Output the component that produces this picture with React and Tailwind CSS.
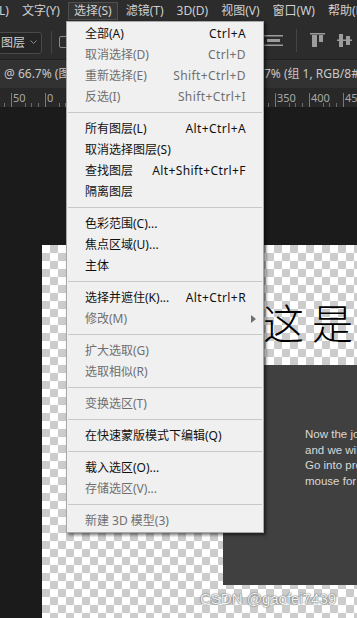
import React from 'react';

const menuBar = ['L)', '文字(Y)', '选择(S)', '滤镜(T)', '3D(D)', '视图(V)', '窗口(W)', '帮助(H)'];

const menu = [
  { label: '全部(A)', keys: 'Ctrl+A' },
  { label: '取消选择(D)', keys: 'Ctrl+D', off: true },
  { label: '重新选择(E)', keys: 'Shift+Ctrl+D', off: true },
  { label: '反选(I)', keys: 'Shift+Ctrl+I', off: true },
  'sep',
  { label: '所有图层(L)', keys: 'Alt+Ctrl+A' },
  { label: '取消选择图层(S)' },
  { label: '查找图层', keys: 'Alt+Shift+Ctrl+F' },
  { label: '隔离图层' },
  'sep',
  { label: '色彩范围(C)...' },
  { label: '焦点区域(U)...' },
  { label: '主体' },
  'sep',
  { label: '选择并遮住(K)...', keys: 'Alt+Ctrl+R' },
  { label: '修改(M)', off: true, sub: true },
  'sep',
  { label: '扩大选取(G)', off: true },
  { label: '选取相似(R)', off: true },
  'sep',
  { label: '变换选区(T)', off: true },
  'sep',
  { label: '在快速蒙版模式下编辑(Q)' },
  'sep',
  { label: '载入选区(O)...' },
  { label: '存储选区(V)...', off: true },
  'sep',
  { label: '新建 3D 模型(3)', off: true },
];

const Ruler = () => {
  const groups = [11, 275];
  const ticks = [];
  groups.forEach((start, g) => {
    const count = g === 0 ? 2 : 3;
    for (let m = 0; m < count; m++) {
      const x = start + m * 34;
      ticks.push(<line key={`M${g}${m}`} x1={x + 0.5} x2={x + 0.5} y1={5} y2={19} stroke="#7a7a7a" />);
      for (let k = 2; k < 5; k++) {
        const mx = Math.round(x + k * 6.8) + 0.5;
        ticks.push(<line key={`m${g}${m}${k}`} x1={mx} x2={mx} y1={15} y2={19} stroke="#6a6a6a" />);
      }
    }
  });
  ticks.push(<line key="pre" x1={4.5} x2={4.5} y1={15} y2={19} stroke="#6a6a6a" />);
  ticks.push(<line key="pre2" x1={268.5} x2={268.5} y1={15} y2={19} stroke="#6a6a6a" />);
  return (
    <svg width="357" height="19" className="block">
      {ticks}
      <text x="13" y="14" fontSize="11" fill="#a9a9a9" fontFamily="Noto Sans">50</text>
      <text x="47" y="14" fontSize="11" fill="#a9a9a9" fontFamily="Noto Sans">0</text>
      <text x="277" y="14" fontSize="11" fill="#a9a9a9" fontFamily="Noto Sans">350</text>
      <text x="311" y="14" fontSize="11" fill="#a9a9a9" fontFamily="Noto Sans">400</text>
      <text x="345" y="14" fontSize="11" fill="#a9a9a9" fontFamily="Noto Sans">450</text>
    </svg>
  );
};

const AlignIcons = () => (
  <div className="flex items-center ml-auto">
    <svg width="19" height="11" className="mr-[13px]">
      <rect x="0" y="0" width="19" height="1.5" fill="#9c9c9c" />
      <rect x="3" y="4" width="13" height="3" fill="#9c9c9c" />
      <rect x="0" y="9.5" width="19" height="1.5" fill="#9c9c9c" />
    </svg>
    <div className="w-px h-[23px] bg-[#454545] mr-[13px]" />
    <svg width="15" height="15" className="mr-[12px]">
      <rect x="0" y="0" width="15" height="1.5" fill="#9c9c9c" />
      <rect x="2" y="2" width="5" height="12" fill="#9c9c9c" />
      <rect x="9" y="2" width="4" height="7" fill="#9c9c9c" />
    </svg>
    <svg width="15" height="13" className="mr-[5px]">
      <rect x="0" y="5.5" width="15" height="1.5" fill="#9c9c9c" />
      <rect x="2" y="0" width="4" height="13" fill="#9c9c9c" />
      <rect x="9" y="2" width="4" height="9" fill="#9c9c9c" />
    </svg>
  </div>
);

export default function App() {
  return (
    <div className="relative w-[357px] h-[618px] overflow-hidden bg-[#1b1b1b] font-['Noto_Sans','Noto_Sans_CJK_SC',sans-serif] flex flex-col">
      {/* menu bar */}
      <div className="h-[22px] shrink-0 bg-[#2c2c2c] flex items-center gap-[3px] ml-[-6px]">
        {menuBar.map((m) => (
          <div
            key={m}
            className={`h-[18px] px-[5px] flex items-center text-[12px] text-[#d0d0d0] whitespace-nowrap ${
              m === '选择(S)' ? 'bg-[#353535] border border-[#4f4f4f] px-[4px]' : ''
            }`}
          >
            {m}
          </div>
        ))}
      </div>

      {/* options bar */}
      <div className="h-[38px] shrink-0 bg-[#2c2c2c] border-b border-[#212121] flex items-center">
        <div className="h-[22px] w-[44px] ml-[-2px] mt-[4px] rounded-[3px] border border-[#4a4a4a] bg-[#252525] flex items-center justify-between pl-[2px] pr-[4px] text-[12px] text-[#cfcfcf]">
          <span>图层</span>
          <svg width="7" height="5" viewBox="0 0 7 5">
            <path d="M0.5 0.5 L3.5 3.5 L6.5 0.5" stroke="#8a8a8a" fill="none" />
          </svg>
        </div>
        <div className="w-px h-[23px] bg-[#454545] ml-[9px] mt-[4px]" />
        <div className="w-[12px] h-[12px] ml-[7px] mt-[2px] rounded-[2px] border border-[#8a8a8a]" />
        <AlignIcons />
      </div>

      {/* document tabs */}
      <div className="h-[28px] shrink-0 bg-[#323232] flex items-center text-[12px] text-[#c8c8c8] whitespace-nowrap overflow-hidden">
        <div className="w-[247px] shrink-0 pl-[4px]">
          <div className="w-[62px] overflow-hidden">@ 66.7% (图层 1)</div>
        </div>
        <div className="shrink-0">66.7% (组 1, RGB/8#)</div>
      </div>

      {/* ruler */}
      <div className="h-[19px] shrink-0 bg-[#282828]">
        <Ruler />
      </div>

      {/* canvas */}
      <div className="flex-1 pl-[42px] pt-[138px] overflow-hidden">
        <div className="h-full bg-[repeating-conic-gradient(#cccccc_0_25%,#ffffff_0_50%)] bg-[length:16px_16px] flex flex-col">
          <div className="h-[120px] shrink-0 pl-[221px] pt-[56px] whitespace-nowrap">
            <span className="text-[41px] leading-none tracking-[8px] text-black font-light font-['Noto_Sans_CJK_SC',sans-serif]">这是</span>
          </div>
          <div className="ml-[181px] h-[220px] bg-[#404040] pl-[82px] pt-[62px] font-['Liberation_Sans',Arial,sans-serif] text-[11.5px] leading-[15.7px] text-[#d8d8d8] whitespace-nowrap overflow-hidden">
            <div>Now the job is done,</div>
            <div>and we will render it.</div>
            <div>Go into preview mode,</div>
            <div>mouse for details.</div>
          </div>
        </div>
      </div>

      {/* select menu */}
      <div className="absolute left-[66px] top-[21px] w-[198px] bg-[#f0f0f0] border border-[#a9a9a9] py-[1px] shadow-[2px_2px_3px_rgba(0,0,0,0.55)]">
        {menu.map((it, i) =>
          it === 'sep' ? (
            <div key={i} className="h-[11px] flex items-center px-[1px]">
              <div className="h-px w-full bg-[#c8c8c8]" />
            </div>
          ) : (
            <div
              key={i}
              className={`h-[21px] flex items-center justify-between pl-[18px] pr-[17px] text-[12px] whitespace-nowrap ${
                it.off ? 'text-[#6f6f6f]' : 'text-[#101010]'
              }`}
            >
              <span>{it.label}</span>
              {it.keys && <span className="tracking-[0.4px]">{it.keys}</span>}
              {it.sub && (
                <svg width="5" height="8" className="mr-[-10px]">
                  <path d="M0 0 L5 4 L0 8 Z" fill="#6f6f6f" />
                </svg>
              )}
            </div>
          )
        )}
      </div>

      {/* watermark */}
      <div className="absolute left-[200px] top-[590px] font-['Liberation_Sans',Arial,sans-serif] text-[15px] leading-[17px] text-[#f2f2f2] [text-shadow:0_0_1px_#555,0_0_2px_#777] whitespace-nowrap">
        CSDN @gaofei7439
      </div>
    </div>
  );
}
